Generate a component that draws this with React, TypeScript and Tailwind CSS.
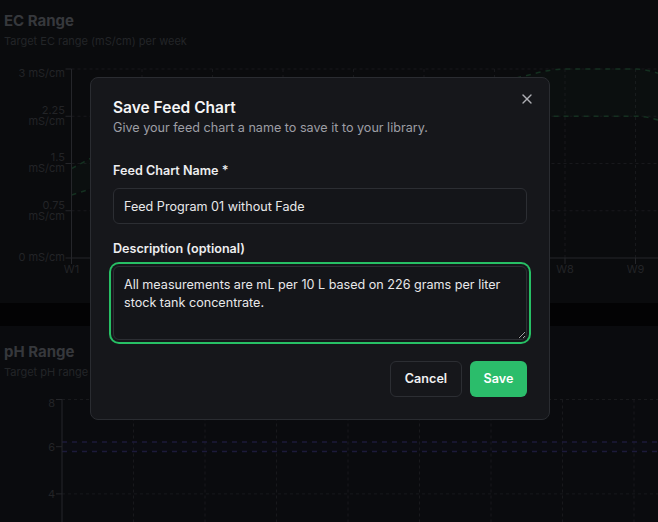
import React, { useEffect, useRef } from 'react';
import { X } from 'lucide-react';

type Pt = [number, number];

// monotone cubic (same idea as recharts "monotone")
const monotone = (pts: Pt[]) => {
    const n = pts.length;
    const dx: number[] = [];
    const m: number[] = [];
    for (let i = 0; i < n - 1; i++) {
        dx.push(pts[i + 1][0] - pts[i][0]);
        m.push((pts[i + 1][1] - pts[i][1]) / dx[i]);
    }
    const t: number[] = [m[0]];
    for (let i = 1; i < n - 1; i++) {
        if (m[i - 1] * m[i] <= 0) t.push(0);
        else t.push((3 * (dx[i - 1] + dx[i])) / ((2 * dx[i] + dx[i - 1]) / m[i - 1] + (dx[i] + 2 * dx[i - 1]) / m[i]));
    }
    t.push(m[n - 2]);
    let d = `M${pts[0][0]},${pts[0][1]}`;
    for (let i = 0; i < n - 1; i++) {
        const h = dx[i] / 3;
        d += `C${pts[i][0] + h},${pts[i][1] + t[i] * h} ${pts[i + 1][0] - h},${pts[i + 1][1] - t[i + 1] * h} ${pts[i + 1][0]},${pts[i + 1][1]}`;
    }
    return d;
};

const GRID = '#18191c';
const AXIS = '#25262a';
const LABEL = '#232427';

const ecX = (i: number) => 71.5 + 70.5 * i;
const ecY = (v: number) => 258 - 63 * v;
const ecUpper = [1.42, 2.0, 2.4, 2.6, 2.7, 2.75, 2.8, 3, 3, 2.6];
const ecLower = [1.0, 1.35, 1.6, 1.8, 1.95, 2.05, 2.2, 2.25, 2.25, 1.9];

const EcChart: React.FC = () => {
    const up: Pt[] = ecUpper.map((v, i) => [ecX(i), ecY(v)]);
    const lo: Pt[] = ecLower.map((v, i) => [ecX(i), ecY(v)]);
    const upPath = monotone(up);
    const loPath = monotone(lo);
    const loRev = monotone([...lo].reverse()).replace(/^M/, 'L');
    const ticks = [
        { y: ecY(3), lines: ['3 mS/cm'], ty: [72.5] },
        { y: ecY(2.25), lines: ['2.25', 'mS/cm'], ty: [110, 121] },
        { y: ecY(1.5), lines: ['1.5', 'mS/cm'], ty: [157, 168] },
        { y: ecY(0.75), lines: ['0.75', 'mS/cm'], ty: [205, 216] },
        { y: ecY(0), lines: ['0 mS/cm'], ty: [257] },
    ];
    return (
        <svg width={658} height={254} className="block">
            <g transform="translate(0,-49)">
                {ticks.slice(0, 4).map((t) => (
                    <line key={t.y} x1={71.5} x2={700} y1={t.y} y2={t.y} stroke={GRID} strokeDasharray="3 3" />
                ))}
                {Array.from({ length: 9 }, (_, i) => (
                    <line key={i} x1={ecX(i + 1)} x2={ecX(i + 1)} y1={69} y2={258} stroke={GRID} strokeDasharray="3 3" />
                ))}
                <path d={`${upPath}${loRev}Z`} fill="#1c4a2b" fillOpacity={0.07} />
                <path d={upPath} fill="none" stroke="#143020" strokeWidth={1.5} strokeDasharray="5 5" />
                <path d={loPath} fill="none" stroke="#143020" strokeWidth={1.5} strokeDasharray="5 5" />
                <line x1={71.5} x2={71.5} y1={69} y2={258} stroke={AXIS} />
                <line x1={71.5} x2={700} y1={258} y2={258} stroke={AXIS} />
                {ticks.map((t) => (
                    <g key={t.y}>
                        <line x1={65.5} x2={71.5} y1={t.y} y2={t.y} stroke={AXIS} />
                        {t.lines.map((l, k) => (
                            <text key={l} x={65} y={t.ty[k]} textAnchor="end" dominantBaseline="central" fontSize={11} fill={LABEL}>
                                {l}
                            </text>
                        ))}
                    </g>
                ))}
                {Array.from({ length: 9 }, (_, i) => (
                    <g key={i}>
                        <line x1={ecX(i)} x2={ecX(i)} y1={258} y2={264} stroke={AXIS} />
                        <text x={ecX(i)} y={269} textAnchor="middle" dominantBaseline="central" fontSize={11} fill={LABEL}>
                            W{i + 1}
                        </text>
                    </g>
                ))}
            </g>
        </svg>
    );
};

const phX = (i: number) => 62 + 71.5 * i;
const phY = (v: number) => 399.5 + (8 - v) * 23.6;

const PhChart: React.FC = () => {
    const hi = phY(6.2);
    const lo = phY(5.8);
    return (
        <svg width={658} height={160} className="block">
            <g transform="translate(0,-380)">
                {[8, 4].map((v) => (
                    <line key={v} x1={62} x2={700} y1={phY(v)} y2={phY(v)} stroke={GRID} strokeDasharray="3 3" />
                ))}
                {Array.from({ length: 9 }, (_, i) => (
                    <line key={i} x1={phX(i + 1)} x2={phX(i + 1)} y1={399.5} y2={540} stroke={GRID} strokeDasharray="3 3" />
                ))}
                <rect x={62} y={hi} width={640} height={lo - hi} fill="#2a2660" fillOpacity={0.05} />
                <line x1={62} x2={700} y1={hi} y2={hi} stroke="#1c1a3a" strokeWidth={1.5} strokeDasharray="5 5" />
                <line x1={62} x2={700} y1={lo} y2={lo} stroke="#1c1a3a" strokeWidth={1.5} strokeDasharray="5 5" />
                <line x1={62} x2={62} y1={399.5} y2={540} stroke={AXIS} />
                {[
                    { v: 8, ty: 403.3 },
                    { v: 6, ty: 446.7 },
                    { v: 4, ty: 494 },
                ].map((t) => (
                    <g key={t.v}>
                        <line x1={56} x2={62} y1={phY(t.v)} y2={phY(t.v)} stroke={AXIS} />
                        <text x={55} y={t.ty} textAnchor="end" dominantBaseline="central" fontSize={11} fill={LABEL}>
                            {t.v}
                        </text>
                    </g>
                ))}
            </g>
        </svg>
    );
};

export default function App() {
    const descRef = useRef<HTMLTextAreaElement>(null);

    useEffect(() => {
        const el = descRef.current;
        if (el) {
            el.focus();
            el.setSelectionRange(el.value.length, el.value.length);
        }
    }, []);

    return (
        <div className="relative w-[658px] h-[522px] overflow-hidden bg-[#030304] font-['Inter','Noto_Sans',sans-serif]">
            {/* Page behind the dialog, already dimmed */}
            <div className="flex flex-col gap-[23px]">
                <section className="h-[303px] bg-[#0a0b0d] pt-[11px]">
                    <h2 className="pl-[4px] text-[15px] leading-[20px] font-bold text-[#36383c]">EC Range</h2>
                    <p className="pl-[4px] mt-[2px] text-[11px] leading-[16px] text-[#232528]">Target EC range (mS/cm) per week</p>
                    <EcChart />
                </section>
                <section className="h-[300px] bg-[#0a0b0e] pt-[16px]">
                    <h2 className="pl-[4px] text-[15px] leading-[20px] font-bold text-[#36383c]">pH Range</h2>
                    <p className="pl-[4px] mt-[2px] text-[11px] leading-[16px] text-[#232528]">Target pH range per week</p>
                    <PhChart />
                </section>
            </div>

            {/* Save dialog */}
            <div className="absolute left-[90px] top-[77px] w-[460px] rounded-[8px] border border-[#2a2c31] bg-[#16171b] p-[22px]">
                <button className="absolute right-[14px] top-[13px] text-[#bfc0c5] opacity-90">
                    <X size={16} strokeWidth={2} />
                </button>
                <h3 className="text-[15.5px] leading-[16px] font-semibold text-[#f4f4f5]">Save Feed Chart</h3>
                <p className="mt-[2px] text-[12.6px] leading-[20px] text-[#9d9ea5]">Give your feed chart a name to save it to your library.</p>

                <div className="mt-[24px] flex flex-col gap-[8px]">
                    <label className="text-[12.6px] leading-[18px] font-semibold text-[#ededef]">Feed Chart Name *</label>
                    <input
                        defaultValue="Feed Program 01 without Fade"
                        className="h-[36px] w-full rounded-[6px] border border-[#2c2e33] bg-[#141519] px-[10px] text-[12.6px] text-[#e8e8ea] outline-none"
                    />
                </div>

                <div className="mt-[16px] flex flex-col gap-[8px]">
                    <label className="text-[12.6px] leading-[18px] font-semibold text-[#ededef]">Description (optional)</label>
                    <textarea
                        ref={descRef}
                        defaultValue="All measurements are mL per 10 L based on 226 grams per liter stock tank concentrate."
                        className="h-[74px] w-full resize-y rounded-[6px] border border-[#2c2e33] bg-[#141519] px-[10px] pt-[9px] pb-[5px] text-[12.6px] leading-[17.5px] text-[#e8e8ea] caret-[#e8e8ea] outline-none ring-2 ring-[#27c065] ring-offset-2 ring-offset-[#16171b]"
                    />
                </div>

                <div className="mt-[21px] flex justify-end gap-[8px]">
                    <button className="h-[36px] w-[72px] rounded-[6px] border border-[#2c2e33] text-[12.6px] font-semibold text-[#f0f0f2]">Cancel</button>
                    <button className="h-[36px] w-[57px] rounded-[6px] bg-[#2bbd6b] text-[12.6px] font-semibold text-white">Save</button>
                </div>
            </div>
        </div>
    );
}
